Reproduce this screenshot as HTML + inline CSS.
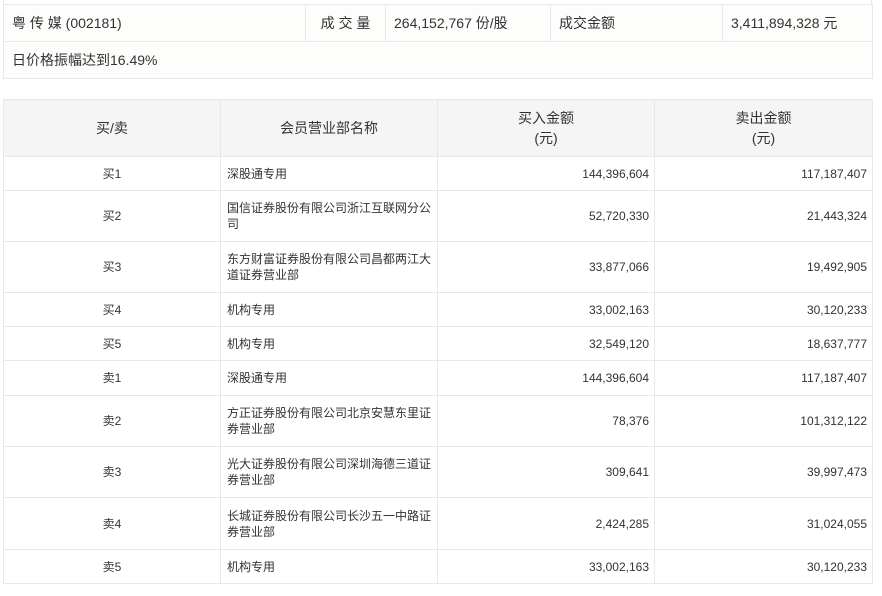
<!DOCTYPE html>
<html><head><meta charset="utf-8"><style>
body{margin:0;background:#fff;font-family:"Liberation Sans","Noto Sans CJK SC",sans-serif;color:#333;}
table{border-collapse:collapse;table-layout:fixed;position:absolute;left:3px;}
td,th{border:1px solid #e8e8e8;padding:0 6px;font-weight:normal;}
#t1{top:4px;width:869px;background:#fdfdfb;font-size:14px;}
#t1 td{height:36px;padding:0 8px;}
#t2{top:99px;width:869px;font-size:12px;}
#t2 th{background:#f5f5f5;font-size:14px;height:56px;text-align:center;line-height:20px;}
#t2 td{line-height:16px;}
#t2 td.c{text-align:center;}
#t2 td.r{text-align:right;padding-right:5px;}
</style></head><body>
<div style="position:absolute;top:0;left:3px;width:869px;height:4px;border-left:1px solid #e8e8e8;border-right:1px solid #e8e8e8;box-sizing:border-box"></div>
<table id="t1">
<col style="width:302px"><col style="width:80px"><col style="width:165px"><col style="width:172px"><col style="width:150px">
<tr><td>粤 传 媒 (002181)</td><td style="text-align:center">成 交 量</td><td>264,152,767 份/股</td><td>成交金额</td><td>3,411,894,328 元</td></tr>
<tr><td colspan="5">日价格振幅达到16.49%</td></tr>
</table>
<table id="t2">
<col style="width:217px"><col style="width:217px"><col style="width:217px"><col style="width:218px">
<tr><th>买/卖</th><th>会员营业部名称</th><th>买入金额<br>(元)</th><th>卖出金额<br>(元)</th></tr>
<tr style="height:34px"><td class="c">买1</td><td>深股通专用</td><td class="r">144,396,604</td><td class="r">117,187,407</td></tr>
<tr style="height:51px"><td class="c">买2</td><td>国信证券股份有限公司浙江互联网分公司</td><td class="r">52,720,330</td><td class="r">21,443,324</td></tr>
<tr style="height:51px"><td class="c">买3</td><td>东方财富证券股份有限公司昌都两江大道证券营业部</td><td class="r">33,877,066</td><td class="r">19,492,905</td></tr>
<tr style="height:34px"><td class="c">买4</td><td>机构专用</td><td class="r">33,002,163</td><td class="r">30,120,233</td></tr>
<tr style="height:34px"><td class="c">买5</td><td>机构专用</td><td class="r">32,549,120</td><td class="r">18,637,777</td></tr>
<tr style="height:35px"><td class="c">卖1</td><td>深股通专用</td><td class="r">144,396,604</td><td class="r">117,187,407</td></tr>
<tr style="height:51px"><td class="c">卖2</td><td>方正证券股份有限公司北京安慧东里证券营业部</td><td class="r">78,376</td><td class="r">101,312,122</td></tr>
<tr style="height:51px"><td class="c">卖3</td><td>光大证券股份有限公司深圳海德三道证券营业部</td><td class="r">309,641</td><td class="r">39,997,473</td></tr>
<tr style="height:52px"><td class="c">卖4</td><td>长城证券股份有限公司长沙五一中路证券营业部</td><td class="r">2,424,285</td><td class="r">31,024,055</td></tr>
<tr style="height:34px"><td class="c">卖5</td><td>机构专用</td><td class="r">33,002,163</td><td class="r">30,120,233</td></tr>
</table>
</body></html>
